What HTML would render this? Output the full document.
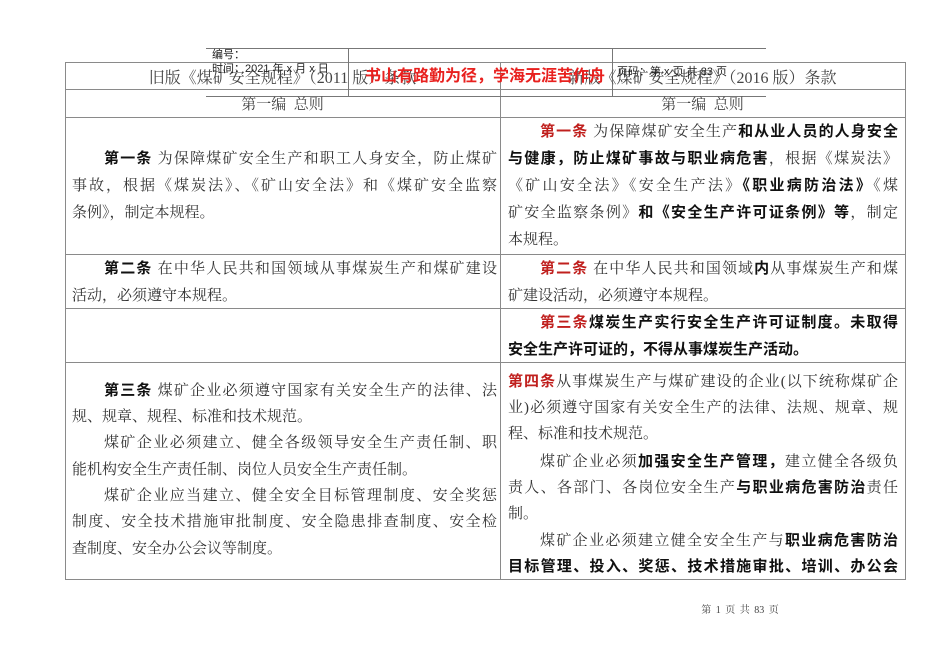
<!DOCTYPE html>
<html><head><meta charset="utf-8"><style>
body{margin:0;width:950px;height:672px;background:#fff;position:relative;overflow:hidden;font-family:"Liberation Serif","Noto Serif CJK SC",serif;color:#333}
.h{position:absolute;height:1px;background:#8a8a8a}
.v{position:absolute;width:1px;background:#8a8a8a}
.t{position:absolute;white-space:nowrap;font-size:15px;line-height:20px}
.L{left:72px;width:425px}
.R{left:508px;width:390px}
.j{text-align:justify;text-align-last:justify}
.i{padding-left:32px;box-sizing:border-box}
b{font-family:"Liberation Sans","Noto Sans CJK SC",sans-serif;font-weight:bold;color:#111}
.r{color:#c0201e}
.s{position:absolute;font-family:"Liberation Sans","Noto Sans CJK SC",sans-serif;font-size:11px;line-height:13px;color:#222;white-space:nowrap}
</style></head><body>
<div class="h" style="left:65px;top:62px;width:841px"></div>
<div class="h" style="left:65px;top:89px;width:841px"></div>
<div class="h" style="left:65px;top:117px;width:841px"></div>
<div class="h" style="left:65px;top:254px;width:841px"></div>
<div class="h" style="left:65px;top:308px;width:841px"></div>
<div class="h" style="left:65px;top:362px;width:841px"></div>
<div class="h" style="left:65px;top:579px;width:841px"></div>
<div class="v" style="left:65px;top:62px;height:518px"></div>
<div class="v" style="left:500px;top:62px;height:518px"></div>
<div class="v" style="left:905px;top:62px;height:518px"></div>
<div class="h" style="left:206px;top:48px;width:560px;background:#777"></div>
<div class="h" style="left:206px;top:96px;width:560px;background:#777"></div>
<div class="v" style="left:348px;top:48px;height:49px;background:#777"></div>
<div class="v" style="left:612px;top:48px;height:49px;background:#777"></div>

<div class="t" style="left:65px;width:435px;text-align:center;top:69px;font-size:16px;color:#444">旧版《煤矿安全规程》（2011 版）条款</div>
<div class="t" style="left:500px;width:405px;text-align:center;top:69px;font-size:16px;color:#444">新版《煤矿安全规程》（2016 版）条款</div>
<div class="s" style="left:212px;top:49px">编号：</div>
<div class="s" style="left:212px;top:63px">时间：2021 年 x 月 x 日</div>
<div class="s" style="left:617px;top:66px">页码：第 x 页 共 83 页</div>
<div style="position:absolute;left:365px;top:62px;font-family:'Liberation Sans','Noto Sans CJK SC',sans-serif;font-weight:bold;font-size:16px;color:#e8201e;white-space:nowrap">书山有路勤为径，学海无涯苦作舟</div>

<div class="t" style="left:65px;width:435px;text-align:center;top:95px;color:#444">第一编&nbsp; 总则</div>
<div class="t" style="left:500px;width:405px;text-align:center;top:95px;color:#444">第一编&nbsp; 总则</div>

<div class="t L j i" style="top:149px"><b>第一条</b> 为保障煤矿安全生产和职工人身安全，防止煤矿</div>
<div class="t L j" style="top:176px">事故，根据《煤炭法》、《矿山安全法》和《煤矿安全监察</div>
<div class="t L" style="top:203px">条例》，制定本规程。</div>
<div class="t L j i" style="top:259px"><b>第二条</b> 在中华人民共和国领域从事煤炭生产和煤矿建设</div>
<div class="t L" style="top:286px">活动，必须遵守本规程。</div>
<div class="t L j i" style="top:381px"><b>第三条</b> 煤矿企业必须遵守国家有关安全生产的法律、法</div>
<div class="t L" style="top:407px">规、规章、规程、标准和技术规范。</div>
<div class="t L j i" style="top:433px">煤矿企业必须建立、健全各级领导安全生产责任制、职</div>
<div class="t L" style="top:460px">能机构安全生产责任制、岗位人员安全生产责任制。</div>
<div class="t L j i" style="top:486px">煤矿企业应当建立、健全安全目标管理制度、安全奖惩</div>
<div class="t L j" style="top:512px">制度、安全技术措施审批制度、安全隐患排查制度、安全检</div>
<div class="t L" style="top:539px">查制度、安全办公会议等制度。</div>

<div class="t R j i" style="top:122px"><b class="r">第一条</b> 为保障煤矿安全生产<b>和从业人员的人身安全</b></div>
<div class="t R j" style="top:149px"><b>与健康，防止煤矿事故与职业病危害</b>，根据《煤炭法》</div>
<div class="t R j" style="top:176px">《矿山安全法》《安全生产法》<b>《职业病防治法》</b>《煤</div>
<div class="t R j" style="top:203px">矿安全监察条例》<b>和《安全生产许可证条例》等</b>，制定</div>
<div class="t R" style="top:230px">本规程。</div>
<div class="t R j i" style="top:259px"><b class="r">第二条</b> 在中华人民共和国领域<b>内</b>从事煤炭生产和煤</div>
<div class="t R" style="top:286px">矿建设活动，必须遵守本规程。</div>
<div class="t R j i" style="top:313px"><b class="r">第三条</b><b>煤炭生产实行安全生产许可证制度。未取得</b></div>
<div class="t R" style="top:340px"><b>安全生产许可证的，不得从事煤炭生产活动。</b></div>
<div class="t R j" style="top:372px"><b class="r">第四条</b>从事煤炭生产与煤矿建设的企业(以下统称煤矿企</div>
<div class="t R j" style="top:398px">业)必须遵守国家有关安全生产的法律、法规、规章、规</div>
<div class="t R" style="top:424px">程、标准和技术规范。</div>
<div class="t R j i" style="top:452px">煤矿企业必须<b>加强安全生产管理，</b>建立健全各级负</div>
<div class="t R j" style="top:478px">责人、各部门、各岗位安全生产<b>与职业病危害防治</b>责任</div>
<div class="t R" style="top:504px">制。</div>
<div class="t R j i" style="top:531px">煤矿企业必须建立健全安全生产与<b>职业病危害防治</b></div>
<div class="t R j" style="top:557px"><b>目标管理、投入、奖惩、技术措施审批、培训、办公会</b></div>

<div style="position:absolute;left:650px;width:180px;text-align:center;top:601px;font-size:10px;color:#444;white-space:pre;word-spacing:2px">第 1 页 共 83 页</div>
</body></html>
